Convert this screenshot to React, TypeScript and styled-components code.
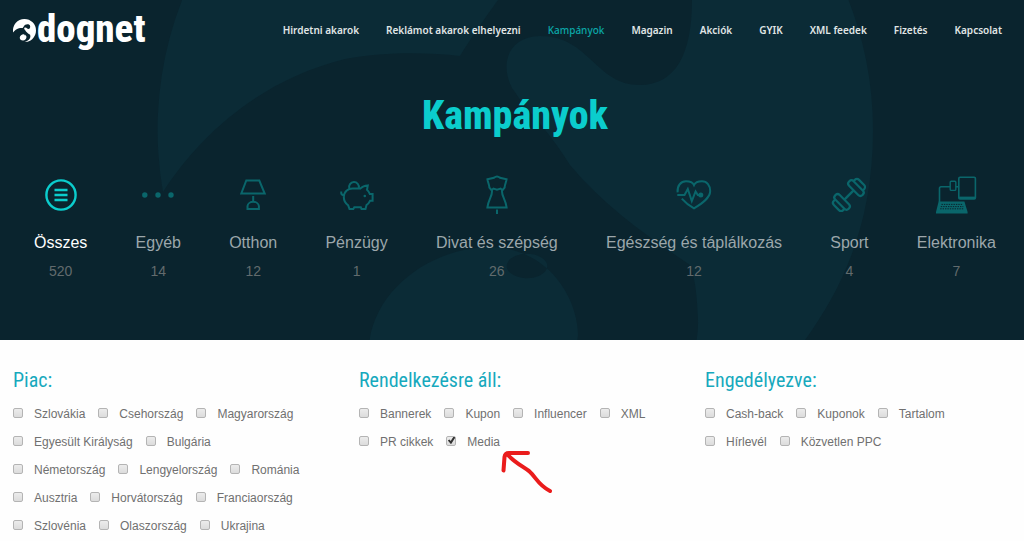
import React from "react";
import styled, { createGlobalStyle, css } from "styled-components";

const GlobalStyle = createGlobalStyle`
  *, *::before, *::after { box-sizing: border-box; }
  body {
    margin: 0;
    background: #fefefe;
    color: #707070;
    font-family: "Liberation Sans", Arial, sans-serif;
  }
`;

const narrow = css`
  font-family: "Roboto Condensed", "Open Sans Condensed", "Liberation Sans", sans-serif;
`;

const Hero = styled.header`
  position: relative;
  overflow: hidden;
  height: 340px;
  background: #0a242e;
`;

const Backdrop = styled.svg`
  position: absolute;
  inset: 0;
  width: 100%;
  height: 100%;
`;

const HeroContent = styled.div`
  position: relative;
  display: flex;
  flex-direction: column;
`;

const TopBar = styled.div`
  display: flex;
  align-items: center;
  justify-content: space-between;
  height: 60px;
  padding: 0 22px 0 13px;
`;

const Logo = styled.a`
  display: flex;
  align-items: center;
  gap: 1px;
  color: #fff;
  text-decoration: none;
`;

const LogoMark = styled.svg`
  width: 23px;
  height: 23px;
`;

const LogoText = styled.span`
  ${narrow}
  font-size: 39px;
  font-weight: 800;
  line-height: 44px;
  padding-bottom: 2px;
`;

const Nav = styled.nav`
  display: flex;
  gap: 27px;
`;

const NavLink = styled.a<{ $active?: boolean }>`
  color: ${(p) => (p.$active ? "#0ba8a8" : "#e0e6e6")};
  font-family: "Noto Sans", sans-serif;
  font-size: 10px;
  font-weight: ${(p) => (p.$active ? 500 : 600)};
  line-height: 16px;
  white-space: nowrap;
  text-decoration: none;
`;

const Title = styled.h1`
  ${narrow}
  margin: 30px 0 0;
  padding-left: 6px;
  color: #0bcdcd;
  font-size: 40px;
  font-weight: 800;
  line-height: 52px;
  text-align: center;
`;

const Categories = styled.div`
  display: flex;
  justify-content: space-between;
  padding: 32px 28px 0 34px;
`;

const Category = styled.a<{ $active?: boolean }>`
  display: flex;
  flex-direction: column;
  align-items: center;
  color: ${(p) => (p.$active ? "#fff" : "#9ca7ab")};
  text-decoration: none;
  svg {
    height: 40px;
    width: 44px;
    margin: 0 -3px;
    color: ${(p) => (p.$active ? "#0bcdcd" : "#0a666b")};
  }
`;

const CategoryName = styled.span`
  margin-top: 19px;
  font-size: 16px;
  line-height: 20px;
  white-space: nowrap;
`;

const CategoryCount = styled.span`
  margin-top: 9px;
  color: #626b6d;
  font-size: 14px;
  line-height: 18px;
`;

const Filters = styled.main`
  display: grid;
  grid-template-columns: repeat(3, 1fr);
  column-gap: 46px;
  padding: 26px 19px 0 13px;
`;

const Group = styled.fieldset`
  min-width: 0;
  margin: 0;
  padding: 0;
  border: 0;
`;

const GroupTitle = styled.legend`
  ${narrow}
  padding: 0;
  color: #17a9bd;
  font-size: 20px;
  font-weight: 400;
  line-height: 28px;
`;

const Options = styled.div`
  display: flex;
  flex-wrap: wrap;
  column-gap: 13px;
  padding-top: 6px;
`;

const Option = styled.label`
  position: relative;
  display: flex;
  align-items: center;
  gap: 11px;
  height: 28px;
  font-size: 12px;
  line-height: 16px;
  white-space: nowrap;
`;

const Checkbox = styled.input`
  appearance: none;
  width: 10px;
  height: 10px;
  margin: 0 0 3px;
  border: 1px solid #b4b4b4;
  border-radius: 2px;
  background: linear-gradient(#ececec, #dcdcdc);
  &:checked::after {
    content: "";
    display: block;
    width: 8px;
    height: 8px;
    background: #333;
    clip-path: polygon(6% 50%, 26% 36%, 42% 56%, 78% 0, 100% 14%, 46% 96%);
  }
`;

const Arrow = styled.svg`
  position: absolute;
  top: 20px;
  left: 100%;
  width: 56px;
  height: 48px;
  pointer-events: none;
`;

const Emblem = () => (
  <>
    <path d="M163 192A357 357 0 0 1 516 -227A357 357 0 0 1 873 130C873 220 845 285 805 340C750 430 650 485 520 487C630 450 700 390 698 320C697 290 694 275 690 265C650 238 605 207 570 165C545 125 530 115 512 88C500 65 507 37 540 36C590 36 595 85 640 85C675 85 692 55 692 0C680 -90 520 -70 498 0C480 25 470 40 460 56C430 53 390 51 345 59C260 80 200 135 163 192Z" />
    <path
      fillRule="evenodd"
      d="M369 345C374 290 430 248 490 247C550 248 578 300 578 335C570 400 530 440 470 440C410 435 365 400 369 345ZM507 264a20 12 0 1 0 40 4a20 12 0 1 0 -40 -4Z"
    />
  </>
);

const icons: Record<string, React.ReactNode> = {
  all: (
    <>
      <circle cx="22" cy="21" r="14.6" strokeWidth="2.4" />
      <path d="M15.5 16H28.5M15.5 21H28.5M15.5 26H28.5" strokeWidth="2.6" />
    </>
  ),
  dots: (
    <g fill="currentColor" stroke="none">
      <circle cx="8.8" cy="21" r="2.7" />
      <circle cx="22" cy="21" r="2.7" />
      <circle cx="35" cy="21" r="2.7" />
    </g>
  ),
  lamp: (
    <path d="M15.3 6.5H28.3L33.7 19.5H10.3ZM22.2 22V28M16.5 35V32C16.8 29.5 19.5 27.8 22.2 27.8S27.6 29.5 27.9 32V35Z" />
  ),
  piggy: (
    <>
      <path d="M6.2 17.5C6 20 7 21.5 9 21.5M8.8 23C8.8 17.5 13 14.4 17.5 14.4H25.5C27 12.8 29.5 11.6 32.8 11.4L32 15.8C33.5 17 34.2 18.5 34.8 20H37.6V26.8H35C34.2 28.6 33 30 31.5 31L30.5 35H26.5L25.8 33.3H19.3L18.3 35H14.5L13.2 31.3C10.2 29.3 8.8 26.4 8.8 23Z" />
      <path d="M14.3 14.4A4.9 4.9 0 1 1 23.8 14" />
      <circle cx="29.8" cy="22" r="1.3" fill="currentColor" stroke="none" />
    </>
  ),
  dress: (
    <path d="M12.4 5.2L19 3.8Q22 1.2 25 3.8L31.6 5.2C31.2 8.5 29.8 10 29.6 13.6L27.4 16.2L25.6 14.6L22 15.6L18.4 14.6L16.6 16.2L14.4 13.6C14.2 10 12.8 8.5 12.4 5.2ZM17 16.4C17.6 22 13.4 25 12.4 33.4H31.6C30.6 25 26.4 22 27 16.4M22 35.5V40" />
  ),
  heart: (
    <>
      <path d="M5.6 18.3C5 11.5 9 7.3 14 7.3C18 7.3 21 9 22 11.2C23 9 26 7.3 30 7.3C35 7.3 38.2 11.5 38.2 17C38.2 24 30 29.5 22 34.3C17.5 31.8 13 28.3 9.8 24.6" />
      <path d="M5.3 21H12.5L15.8 15L19.8 27L23.6 17.5L25.8 21H28" />
      <circle cx="28.8" cy="21" r="2.5" fill="currentColor" stroke="none" />
    </>
  ),
  dumbbell: (
    <g transform="rotate(-45 22 21)" strokeWidth="2.2">
      <path d="M15.5 21H28.5" strokeWidth="2.4" />
      <rect x="9" y="11.5" width="6.4" height="19" rx="3" />
      <rect x="28.6" y="11.5" width="6.4" height="19" rx="3" />
      <path d="M9 14.4H7.2A3 3 0 0 0 4.2 17.4V24.6A3 3 0 0 0 7.2 27.6H9M35 14.4H36.8A3 3 0 0 1 39.8 17.4V24.6A3 3 0 0 1 36.8 27.6H35" />
    </g>
  ),
  devices: (
    <>
      <path d="M5.5 28V14.5A1.6 1.6 0 0 1 7 12.8H16M22 12.8H24.5" strokeWidth="1.6" />
      <rect x="24.8" y="3.2" width="16.6" height="21.8" rx="1.2" strokeWidth="1.6" />
      <path d="M24.8 23.8H41.4" strokeWidth="2.4" />
      <rect x="16.2" y="7.2" width="5.6" height="9.2" rx="1" strokeWidth="1.4" />
      <path d="M4.6 27.6H30.4L33.6 38V39.4H2V38Z" fill="currentColor" stroke="none" />
      <path
        d="M7.5 30.4H28.5M6.8 32.6H29.3M6.2 34.8H30"
        stroke="#0a242e"
        strokeWidth="1"
        strokeDasharray="1.4 1"
      />
    </>
  ),
};

const navItems = [
  "Hirdetni akarok",
  "Reklámot akarok elhelyezni",
  "Kampányok",
  "Magazin",
  "Akciók",
  "GYIK",
  "XML feedek",
  "Fizetés",
  "Kapcsolat",
];

const categories = [
  { name: "Összes", count: 520, icon: "all" },
  { name: "Egyéb", count: 14, icon: "dots" },
  { name: "Otthon", count: 12, icon: "lamp" },
  { name: "Pénzügy", count: 1, icon: "piggy" },
  { name: "Divat és szépség", count: 26, icon: "dress" },
  { name: "Egészség és táplálkozás", count: 12, icon: "heart" },
  { name: "Sport", count: 4, icon: "dumbbell" },
  { name: "Elektronika", count: 7, icon: "devices" },
];

const groups = [
  {
    title: "Piac:",
    options: [
      "Szlovákia", "Csehország", "Magyarország", "Egyesült Királyság", "Bulgária",
      "Németország", "Lengyelország", "Románia", "Ausztria", "Horvátország",
      "Franciaország", "Szlovénia", "Olaszország", "Ukrajina",
    ],
  },
  {
    title: "Rendelkezésre áll:",
    options: ["Bannerek", "Kupon", "Influencer", "XML", "PR cikkek", "Media"],
  },
  {
    title: "Engedélyezve:",
    options: ["Cash-back", "Kuponok", "Tartalom", "Hírlevél", "Közvetlen PPC"],
  },
];

export default function App() {
  return (
    <>
      <GlobalStyle />
      <Hero>
        <Backdrop viewBox="0 0 1024 340" preserveAspectRatio="xMidYMid slice" fill="#0b2b36" aria-hidden="true">
          <Emblem />
        </Backdrop>
        <HeroContent>
          <TopBar>
            <Logo href="#">
              <LogoMark viewBox="159 -227 714 714" fill="currentColor" aria-hidden="true">
                <Emblem />
              </LogoMark>
              <LogoText>dognet</LogoText>
            </Logo>
            <Nav>
              {navItems.map((item) => (
                <NavLink key={item} href="#" $active={item === "Kampányok"}>
                  {item}
                </NavLink>
              ))}
            </Nav>
          </TopBar>
          <Title>Kampányok</Title>
          <Categories>
            {categories.map((c) => (
              <Category key={c.name} href="#" $active={c.icon === "all"}>
                <svg viewBox="0 0 44 40" fill="none" stroke="currentColor" strokeWidth="2" aria-hidden="true">
                  {icons[c.icon]}
                </svg>
                <CategoryName>{c.name}</CategoryName>
                <CategoryCount>{c.count}</CategoryCount>
              </Category>
            ))}
          </Categories>
        </HeroContent>
      </Hero>
      <Filters>
        {groups.map((g) => (
          <Group key={g.title}>
            <GroupTitle>{g.title}</GroupTitle>
            <Options>
              {g.options.map((o) => (
                <Option key={o}>
                  <Checkbox type="checkbox" defaultChecked={o === "Media"} />
                  {o}
                  {o === "Media" && (
                    <Arrow
                      viewBox="0 0 56 48"
                      fill="none"
                      stroke="#ea1c1c"
                      strokeWidth="4"
                      strokeLinecap="round"
                      strokeLinejoin="round"
                      aria-hidden="true"
                    >
                      <path d="M3.5 22.5L4.5 9Q5 5 9 5H28M7 6C14 14 22 18 29 23C36 29 38 37 50 43" />
                    </Arrow>
                  )}
                </Option>
              ))}
            </Options>
          </Group>
        ))}
      </Filters>
    </>
  );
}
